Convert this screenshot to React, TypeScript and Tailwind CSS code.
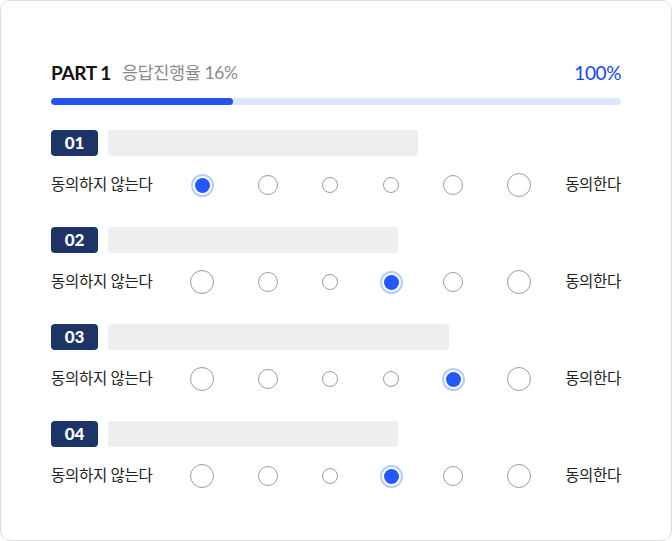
import { useState } from 'react';

interface Question {
  id: string;
  barWidth: string;
  selected: number;
}

const sizes = ['w-[24px] h-[24px]', 'w-[20px] h-[20px]', 'w-[16px] h-[16px]', 'w-[16px] h-[16px]', 'w-[20px] h-[20px]', 'w-[24px] h-[24px]'];
const gaps = ['ml-0', 'ml-[42px]', 'ml-[38px]', 'ml-[37px]', 'ml-[38px]', 'ml-[42px]'];

export default function App() {
  const [questions, setQuestions] = useState<Question[]>([
    { id: '01', barWidth: 'w-[310px]', selected: 0 },
    { id: '02', barWidth: 'w-[290px]', selected: 3 },
    { id: '03', barWidth: 'w-[341px]', selected: 4 },
    { id: '04', barWidth: 'w-[290px]', selected: 3 },
  ]);

  const select = (qi: number, value: number) => {
    setQuestions(prev => prev.map((q, i) => (i === qi ? { ...q, selected: value } : q)));
  };

  return (
    <div className="w-[672px] h-[541px] bg-white border border-[#dedede] rounded-[10px] px-[50px] pt-[60px] font-['Lato','Noto_Sans_CJK_KR',sans-serif]">
      {/* Header */}
      <div className="flex items-center justify-between h-[24px]">
        <div className="flex items-center">
          <span className="text-[19px] font-bold text-[#111] tracking-[-0.4px]">PART 1</span>
          <span className="ml-[11px] text-[17.5px] text-[#8a8a8a] tracking-[-0.4px]">응답진행율 16%</span>
        </div>
        <span className="text-[19px] text-[#1645ff] tracking-[-0.4px]">100%</span>
      </div>

      {/* Progress */}
      <div className="mt-[13px] h-[7px] rounded-full bg-[#dbe6fd] overflow-hidden">
        <div className="h-full w-[182px] rounded-full bg-[#2553f3]"></div>
      </div>

      {/* Questions */}
      <div className="mt-[25px] flex flex-col gap-[30px]">
        {questions.map((q, qi) => (
          <div key={q.id}>
            <div className="flex items-center gap-[10px]">
              <div className="w-[47px] h-[26px] rounded-[4px] bg-[#1c3466] flex items-center justify-center text-white text-[17px] font-black">
                {q.id}
              </div>
              <div className={`${q.barWidth} h-[26px] rounded-[3px] bg-[#eeeeee]`}></div>
            </div>
            <div className="mt-[17px] flex items-center justify-between h-[24px]">
              <div className="flex items-center">
                <span className="w-[139px] text-[15.5px] text-[#222] tracking-[-0.3px]">동의하지 않는다</span>
                {sizes.map((size, i) => (
                  <button
                    key={i}
                    onClick={() => select(qi, i)}
                    className={`${gaps[i]} w-[24px] h-[24px] flex items-center justify-center`}
                  >
                    {q.selected === i ? (
                      <span className="w-[23px] h-[23px] rounded-full border-2 border-[#b6ccff] flex items-center justify-center">
                        <span className="w-[15px] h-[15px] rounded-full bg-[#2457ff]"></span>
                      </span>
                    ) : (
                      <span className={`${size} rounded-full border-[1.5px] border-[#9c9c9c] bg-white`}></span>
                    )}
                  </button>
                ))}
              </div>
              <span className="text-[15.5px] text-[#222] tracking-[-0.3px]">동의한다</span>
            </div>
          </div>
        ))}
      </div>
    </div>
  );
}
